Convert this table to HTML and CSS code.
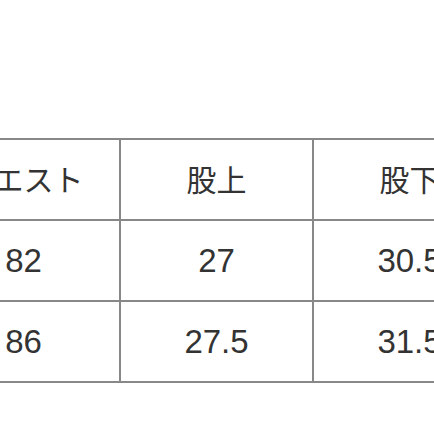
FILE: index.html
```html
<!DOCTYPE html>
<html lang="ja">
<head>
<meta charset="utf-8">
<link rel="stylesheet" href="styles.css">
</head>
<body>
<div class="frame">
  <table class="size-table">
    <colgroup>
      <col class="col">
      <col class="col">
      <col class="col">
    </colgroup>
    <tr class="head">
      <td>ウエスト</td>
      <td>股上</td>
      <td>股下</td>
    </tr>
    <tr>
      <td class="num">82</td>
      <td class="num">27</td>
      <td class="num">30.5</td>
    </tr>
    <tr>
      <td class="num">86</td>
      <td class="num">27.5</td>
      <td class="num">31.5</td>
    </tr>
  </table>
</div>
</body>
</html>
```
FILE: styles.css
```css
html, body {
  margin: 0;
  padding: 0;
  background: #ffffff;
}
.frame {
  width: 434px;
  height: 434px;
  overflow: hidden;
  padding-top: 138px;
  box-sizing: border-box;
}
.size-table {
  margin-left: -74px;
  border-collapse: collapse;
  table-layout: fixed;
  width: 579px;
  font-family: "Liberation Sans", "Noto Sans CJK JP", sans-serif;
  color: #333333;
}
.col {
  width: 193px;
}
.size-table td {
  border: 2px solid #888888;
  height: 79px;
  padding: 0;
  text-align: center;
  vertical-align: middle;
  box-sizing: border-box;
}
.size-table tr {
  height: 81px;
}
.head td {
  font-family: "Noto Sans CJK JP", sans-serif;
  font-size: 30px;
  font-weight: 400;
  padding-bottom: 4px;
}
.num {
  font-size: 33px;
}
```
